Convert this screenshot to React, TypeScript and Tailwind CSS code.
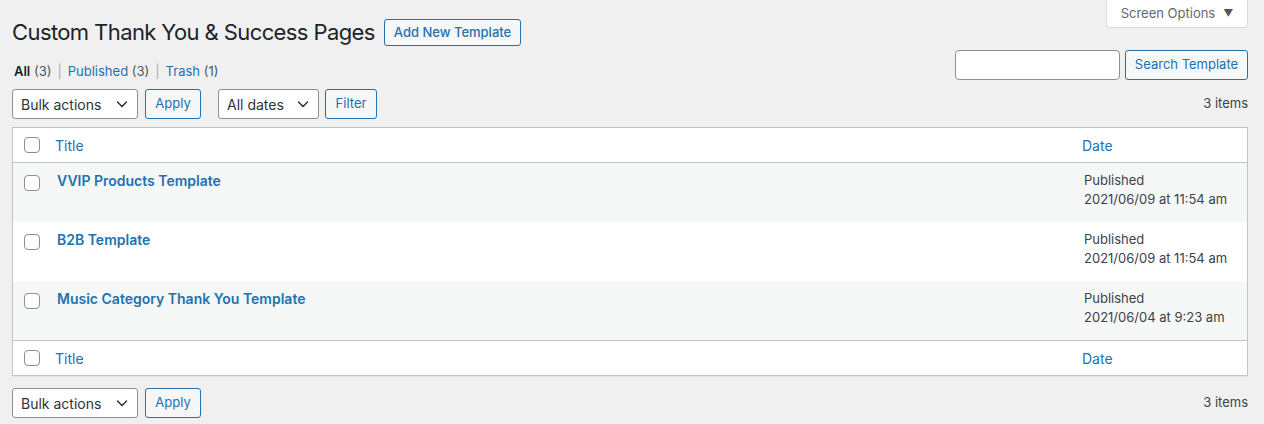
import React from "react";

const Chevron = () => (
  <svg width="16" height="16" viewBox="0 0 16 16" className="shrink-0">
    <path d="M3.5 6 L8 10.5 L12.5 6" fill="none" stroke="#2c3338" strokeWidth="1.5" strokeLinecap="round" strokeLinejoin="round" />
  </svg>
);

const Select = ({ label, w }: { label: string; w: string }) => (
  <div className={`${w} h-[30px] flex items-center justify-between pl-2 pr-[7px] bg-white border border-[#8c8f94] rounded-[3px] text-[14px] text-[#2c3338]`}>
    <span>{label}</span>
    <Chevron />
  </div>
);

const Btn = ({ label, w, h = "h-[30px]" }: { label: string; w: string; h?: string }) => (
  <div className={`${w} ${h} flex items-center justify-center bg-[#f6f7f7] border border-[#2271b1] rounded-[3px] text-[13px] text-[#2271b1]`}>
    {label}
  </div>
);

const Check = () => <div className="w-4 h-4 rounded-[4px] border border-[#8c8f94] bg-white shrink-0" />;

const rows = [
  { t: "VVIP Products Template", d: "2021/06/09 at 11:54 am", bg: "bg-[#f6f7f7]" },
  { t: "B2B Template", d: "2021/06/09 at 11:54 am", bg: "bg-white" },
  { t: "Music Category Thank You Template", d: "2021/06/04 at 9:23 am", bg: "bg-[#f6f7f7]" },
];

const HeadRow = ({ border }: { border: string }) => (
  <div className={`flex items-center h-[35px] ${border} border-[#c3c4c7] bg-white`}>
    <div className="w-[42px] pl-[11px] flex items-center"><Check /></div>
    <div className="flex-1 text-[14px] text-[#2271b1]">Title</div>
    <div className="w-[165px] text-[14px] text-[#2271b1]">Date</div>
  </div>
);

export default function App() {
  return (
    <div className="min-h-screen bg-[#f0f0f1] font-['Inter','Liberation_Sans',sans-serif] text-[13px] text-[#3c434a]">
      <div className="pl-3 pr-4">
        <div className="flex justify-between items-start">
          <div className="pt-[19px]">
            <div className="flex items-center gap-[9px]">
              <h1 className="text-[22px] leading-[27px] font-normal text-[#1d2327] tracking-[-0.6px]">Custom Thank You &amp; Success Pages</h1>
              <div className="h-[27px] px-[9px] flex items-center bg-[#f6f7f7] border border-[#2271b1] rounded-[3px] text-[13px] font-medium text-[#2271b1]">Add New Template</div>
            </div>
            <div className="mt-[15px] pl-[2px] leading-[20px] text-[13px] text-[#50575e] flex gap-[6px]">
              <span><span className="font-semibold text-[#1d2327]">All</span> (3)</span>
              <span className="text-[#a7aaad]">|</span>
              <span><span className="text-[#2271b1]">Published</span> (3)</span>
              <span className="text-[#a7aaad]">|</span>
              <span><span className="text-[#2271b1]">Trash</span> (1)</span>
            </div>
          </div>
          <div className="flex flex-col items-end">
            <div className="w-[142px] h-[28px] flex items-center justify-center gap-[8px] bg-white border border-t-0 border-[#dcdcde] rounded-b-[4px] text-[13px] text-[#646970]">
              <span>Screen Options</span>
              <span className="text-[10px] text-[#50575e]">▼</span>
            </div>
            <div className="mt-[22px] flex gap-[5px]">
              <div className="w-[165px] h-[30px] bg-white border border-[#8c8f94] rounded-[4px]" />
              <Btn label="Search Template" w="w-[123px]" />
            </div>
          </div>
        </div>

        <div className="mt-[8px] h-[30px] flex items-center">
          <Select label="Bulk actions" w="w-[126px]" />
          <div className="ml-[7px]"><Btn label="Apply" w="w-[56px]" /></div>
          <div className="ml-[17px]"><Select label="All dates" w="w-[101px]" /></div>
          <div className="ml-[6px]"><Btn label="Filter" w="w-[52px]" /></div>
          <div className="ml-auto text-[13px] text-[#3c434a]">3 items</div>
        </div>

        <div className="mt-2 border border-[#c3c4c7] shadow-[0_1px_1px_rgba(0,0,0,0.04)]">
          <HeadRow border="border-b" />
          {rows.map((r) => (
            <div key={r.t} className={`flex items-start h-[59px] ${r.bg}`}>
              <div className="w-[42px] pl-[11px] pt-[12px] flex"><Check /></div>
              <div className="flex-1 pt-[8px] pl-[2px] text-[14px] leading-[20px] font-semibold text-[#2271b1]">{r.t}</div>
              <div className="w-[165px] pt-[8px] pl-[2px] text-[13px] leading-[19px] text-[#3c434a]">
                <div>Published</div>
                <div>{r.d}</div>
              </div>
            </div>
          ))}
          <HeadRow border="border-t" />
        </div>

        <div className="mt-3 h-[30px] flex items-center">
          <Select label="Bulk actions" w="w-[126px]" />
          <div className="ml-[7px]"><Btn label="Apply" w="w-[56px]" /></div>
          <div className="ml-auto text-[13px] text-[#3c434a]">3 items</div>
        </div>
      </div>
    </div>
  );
}
